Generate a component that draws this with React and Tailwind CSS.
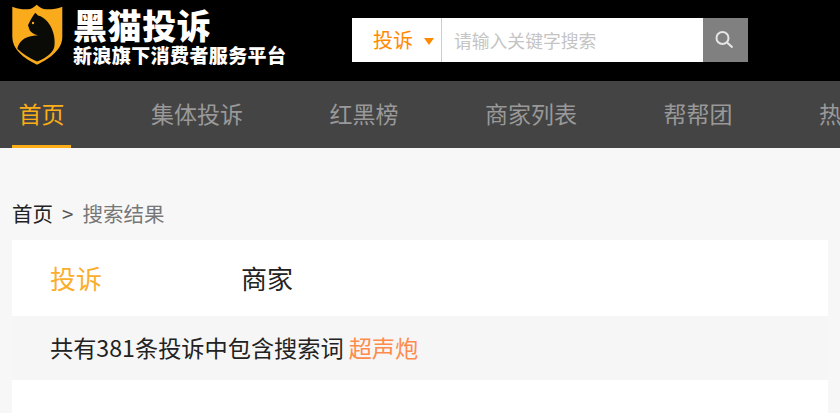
const navItems = ["首页", "集体投诉", "红黑榜", "商家列表", "帮帮团", "热门"];

function LogoMark() {
  return (
    <svg width="51" height="62" viewBox="0 0 51 62" className="shrink-0">
      <path
        d="M0.3 2.7C6 5 11 5.6 16 5.3C19 5 22 3.4 24.7 0.7C27.4 3.4 31 5 34 5.3C39 5.6 45 5 50.3 2.7V33C50.3 45 39 54 25 60.7C11 54 0.3 45 0.3 33Z"
        fill="#f9ab1c"
      />
      <path
        d="M23.3 8.7L26 11.6C33 13 39 21 41 28C43 34 43 41 42 44C40 50 32 55 25 57.6C17 54 11 50 5.3 44.7C7 38 11 34.7 16 33C20 31.8 23 31.6 26 31.3C22 30.5 19 28.5 17.7 26.3L16 21.3C17 19 18 17 19.3 14.7C20.5 12.5 22 10.5 23.3 8.7Z"
        fill="#0a0a06"
      />
      <circle cx="21" cy="19" r="1.2" fill="#f9ab1c" />
    </svg>
  );
}

export default function App() {
  return (
    <div className="h-[413px] overflow-hidden bg-[#f7f7f7] font-['Noto_Sans_CJK_SC','Noto_Sans',sans-serif]">
      <header className="flex h-[81px] items-start bg-black">
        <div className="ml-3 mt-1 flex w-[340px] items-start">
          <LogoMark />
          <div className="ml-[10px] mt-[3px] flex flex-col text-white">
            <div className="text-[34px] font-black leading-[36px] tracking-[0.6px]">
              黑猫投诉
            </div>
            <div className="mt-[1px] text-[19px] font-black leading-[22px] tracking-[0.4px]">
              新浪旗下消费者服务平台
            </div>
          </div>
        </div>
        <div className="mt-[18px] flex h-[44px] w-[396px] bg-white">
          <div className="flex w-[90px] items-center border-r border-[#cccccc] pl-[21px]">
            <span className="text-[20px] leading-none text-[#ff8a00]">投诉</span>
            <span className="ml-[11px] mt-[3px] h-0 w-0 border-x-[5px] border-t-[7px] border-x-transparent border-t-[#ff8a00]" />
          </div>
          <div className="flex flex-1 items-center pl-[12px] text-[17.8px] text-[#c4c4c4]">
            请输入关键字搜索
          </div>
          <div className="flex w-[45px] items-center justify-center bg-[#808080] pb-[2px] pr-[3px]">
            <svg width="18" height="18" viewBox="0 0 18 18" fill="none" stroke="#e6e6e6" strokeWidth="2">
              <circle cx="7.5" cy="8" r="6" />
              <path d="M12 12.5L17.5 17.5" />
            </svg>
          </div>
        </div>
      </header>

      <nav className="flex h-[67px] gap-[73.5px] overflow-hidden whitespace-nowrap bg-[#444444] pl-3 text-[23px]">
        {navItems.map((item, i) => (
          <div
            key={item}
            className={`flex h-full items-center border-b-[3px] px-[6.5px] ${
              i === 0
                ? "border-[#fbae17] text-[#fbae17]"
                : "border-transparent text-[#999999]"
            }`}
          >
            {item}
          </div>
        ))}
      </nav>

      <div className="mt-[51px] flex h-[28px] items-center px-3 text-[20.5px] leading-none">
        <span className="text-[#222222]">首页</span>
        <span className="mx-[9px] text-[#555555]">&gt;</span>
        <span className="text-[#777777]">搜索结果</span>
      </div>

      <div className="mx-3 mt-[13px] flex h-[76px] items-center bg-white pb-[2px] pl-[38px] text-[26px]">
        <span className="w-[191px] text-[#fbae2c]">投诉</span>
        <span className="text-[#222222]">商家</span>
      </div>

      <div className="mx-3 flex h-[64px] items-center bg-[#f6f6f6] pb-[2px] pl-[38px] text-[23.2px] text-[#222222]">
        共有381条投诉中包含搜索词
        <span className="ml-[5px] text-[#ff8b4d]">超声炮</span>
      </div>

      <div className="mx-3 h-[40px] bg-white" />
    </div>
  );
}
